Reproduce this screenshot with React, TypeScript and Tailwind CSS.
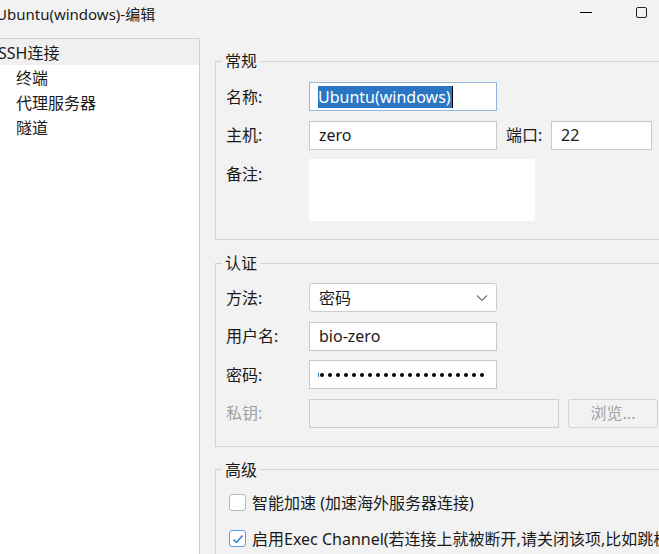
import React from "react";

const FONT = { fontFamily: '"Noto Sans", "Noto Sans CJK SC", sans-serif' };

const Field = ({ label, children, disabled }: { label: string; children: React.ReactNode; disabled?: boolean }) => (
  <div className="flex items-start">
    <div className={`flex h-[29px] w-[83px] shrink-0 items-center ${disabled ? "text-[#a0a0a0]" : ""}`}>{label}</div>
    {children}
  </div>
);

const TextBox = ({ value, width }: { value: string; width: string }) => (
  <div className={`flex h-[29px] ${width} items-center border border-[#c8c8c8] bg-white pl-[9px]`}>{value}</div>
);

const Group = ({ title, children, className }: { title: string; children: React.ReactNode; className?: string }) => (
  <fieldset className={`w-[480px] border border-[#d3d3d3] ${className ?? ""}`}>
    <legend className="ml-[6px] px-[3px] leading-[20px]">{title}</legend>
    {children}
  </fieldset>
);

export default function App() {
  const dots = Array.from({ length: 21 });

  return (
    <div className="h-[554px] w-[659px] overflow-hidden bg-[#f2f2f2] text-[16px] text-[#1a1a1a]" style={FONT}>
      {/* title bar */}
      <div className="flex h-[38px] items-center text-[15px]">
        <span className="-ml-[4px] -mt-[10px]">Ubuntu(windows)-编辑</span>
        <div className="ml-auto mr-[12px] flex items-center gap-[44px]">
          <div className="-mt-[14px] h-[1px] w-[12px] bg-black" />
          <div className="-mt-[14px] h-[11px] w-[11px] rounded-[2px] border border-[#222]" />
        </div>
      </div>

      <div className="flex">
        {/* tree */}
        <aside className="h-[516px] w-[200px] shrink-0 border-t border-r border-[#d0d0d0] bg-white">
          <div className="flex h-[26px] items-center bg-[#f0f0f0] pt-[1px]">
            <span className="-ml-[2px]">SSH连接</span>
          </div>
          <div className="flex h-[25px] items-center pl-[16px] pt-[1px]">终端</div>
          <div className="flex h-[25px] items-center pl-[16px] pt-[1px]">代理服务器</div>
          <div className="flex h-[25px] items-center pl-[16px] pt-[1px]">隧道</div>
        </aside>

        {/* settings */}
        <main className="min-w-0 flex-1 pl-[15px] pt-[13px]">
          <Group title="常规">
            <div className="flex flex-col gap-[9.5px] pb-[18px] pl-[10px] pt-[11px]">
              <Field label="名称:">
                <div className="flex h-[29px] w-[188px] items-center border border-[#94b6de] bg-white pl-[8px]">
                  <span className="flex h-[22px] items-center bg-[#2a76c4] pr-[1px] text-white">Ubuntu(windows)</span>
                  <span className="h-[22px] w-[1px] bg-black" />
                </div>
              </Field>
              <Field label="主机:">
                <TextBox value="zero" width="w-[188px]" />
                <div className="flex h-[29px] w-[54px] items-center pl-[9px]">端口:</div>
                <TextBox value="22" width="w-[101px]" />
              </Field>
              <Field label="备注:">
                <div className="h-[62px] w-[226px] bg-white" />
              </Field>
            </div>
          </Group>

          <Group title="认证" className="mt-[13px]">
            <div className="flex flex-col gap-[9.5px] pb-[18px] pl-[10px] pt-[10px]">
              <Field label="方法:">
                <div className="flex h-[29px] w-[188px] items-center rounded-[3px] border border-[#cdcdcd] bg-white pl-[9px] pr-[8px]">
                  <span>密码</span>
                  <svg className="ml-auto" width="12" height="8" viewBox="0 0 12 8">
                    <polyline points="1,1.5 6,6.5 11,1.5" fill="none" stroke="#707070" strokeWidth="1.1" />
                  </svg>
                </div>
              </Field>
              <Field label="用户名:">
                <TextBox value="bio-zero" width="w-[188px]" />
              </Field>
              <Field label="密码:">
                <div className="flex h-[29px] w-[188px] items-center border border-[#c8c8c8] bg-white pl-[8px]">
                  <span className="mr-[1px] h-[4px] w-[1px] bg-[#1a7bd0]" />
                  <div className="flex gap-[4px]">
                    {dots.map((_, i) => (
                      <span key={i} className="h-[4px] w-[4px] rounded-full bg-black" />
                    ))}
                  </div>
                </div>
              </Field>
              <Field label="私钥:" disabled>
                <div className="h-[29px] w-[250px] border border-[#cdcdcd] bg-[#f2f2f2]" />
                <div className="ml-[9px] flex h-[29px] w-[90px] items-center justify-center rounded-[3px] border border-[#d3d3d3] bg-[#f2f2f2] text-[#a3a3a3]">
                  浏览...
                </div>
              </Field>
            </div>
          </Group>

          <Group title="高级" className="mt-[13px]">
            <div className="flex flex-col gap-[16px] pl-[13px] pt-[13px] pb-[20px]">
              <label className="flex h-[20px] items-center gap-[6px] whitespace-nowrap">
                <span className="h-[17px] w-[17px] shrink-0 rounded-[3px] border border-[#b8b8b8] bg-white" />
                智能加速 (加速海外服务器连接)
              </label>
              <label className="flex h-[20px] items-center gap-[6px] whitespace-nowrap">
                <span className="flex h-[17px] w-[17px] shrink-0 items-center justify-center rounded-[3px] border border-[#5c9fe8] bg-white">
                  <svg width="12" height="10" viewBox="0 0 12 10">
                    <polyline points="1.5,5.5 4.5,8.5 10.5,1.5" fill="none" stroke="#2f7fd8" strokeWidth="1.5" />
                  </svg>
                </span>
                启用Exec Channel(若连接上就被断开,请关闭该项,比如跳板机)
              </label>
            </div>
          </Group>
        </main>
      </div>
    </div>
  );
}
